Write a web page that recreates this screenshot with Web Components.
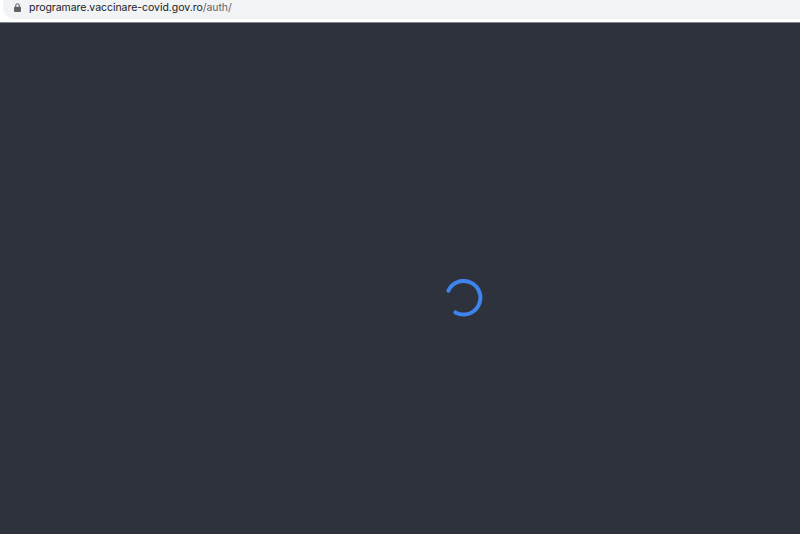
<!DOCTYPE html>
<html>
<head>
<meta charset="utf-8">
<title>programare.vaccinare-covid.gov.ro</title>
<style>
  html, body { margin: 0; height: 100%; background: #2d323c; }
  body { display: flex; flex-direction: column; overflow: hidden; }
</style>
</head>
<body>
<address-bar host="programare.vaccinare-covid.gov.ro" path="/auth/"></address-bar>
<loading-screen></loading-screen>
<script>
class AddressBarElement extends HTMLElement {
  constructor() {
    super();
    const root = this.attachShadow({ mode: "open" });
    root.innerHTML = `
      <style>
        :host {
          display: block;
          height: 23px;
          flex: none;
          box-sizing: border-box;
          padding-left: 3px;
          background: #fff;
          border-bottom: 1px solid #80868b;
        }
        .pill {
          display: flex;
          align-items: center;
          gap: 8px;
          height: 19px;
          padding: 0 0 4px 11px;
          box-sizing: border-box;
          border-bottom-left-radius: 12px;
          background: #f1f3f4;
          font: 10.5px/15px Inter, "Liberation Sans", sans-serif;
          letter-spacing: -0.04px;
          color: #202124;
        }
        svg { width: 7px; height: 9px; flex: none; }
        .path { color: #5f6368; }
      </style>
      <div class="pill">
        <svg viewBox="0 0 8 10"><path fill="none" stroke="#5f6368" stroke-width="1.2" d="M2 4.5V2.8a2 2 0 0 1 4 0v1.7"/><rect y="4" width="8" height="6" rx="1" fill="#5f6368"/></svg>
        <span>${this.getAttribute("host")}<span class="path">${this.getAttribute("path")}</span></span>
      </div>
    `;
  }
}

class LoadingScreenElement extends HTMLElement {
  constructor() {
    super();
    const root = this.attachShadow({ mode: "open" });
    root.innerHTML = `
      <style>
        :host {
          display: flex;
          flex: 1;
          align-items: center;
          justify-content: center;
          background: #2d323c;
        }
        svg { width: 38px; height: 38px; margin-left: 128px; margin-bottom: -38px; }
      </style>
      <svg viewBox="0 0 38 38">
        <path fill="none" stroke="#3f84ec" stroke-width="4" stroke-linecap="round" d="M3.4 11.6A16.8 16.8 0 1 1 10.4 33.4"/>
      </svg>
    `;
  }
}

customElements.define("address-bar", AddressBarElement);
customElements.define("loading-screen", LoadingScreenElement);
</script>
</body>
</html>
